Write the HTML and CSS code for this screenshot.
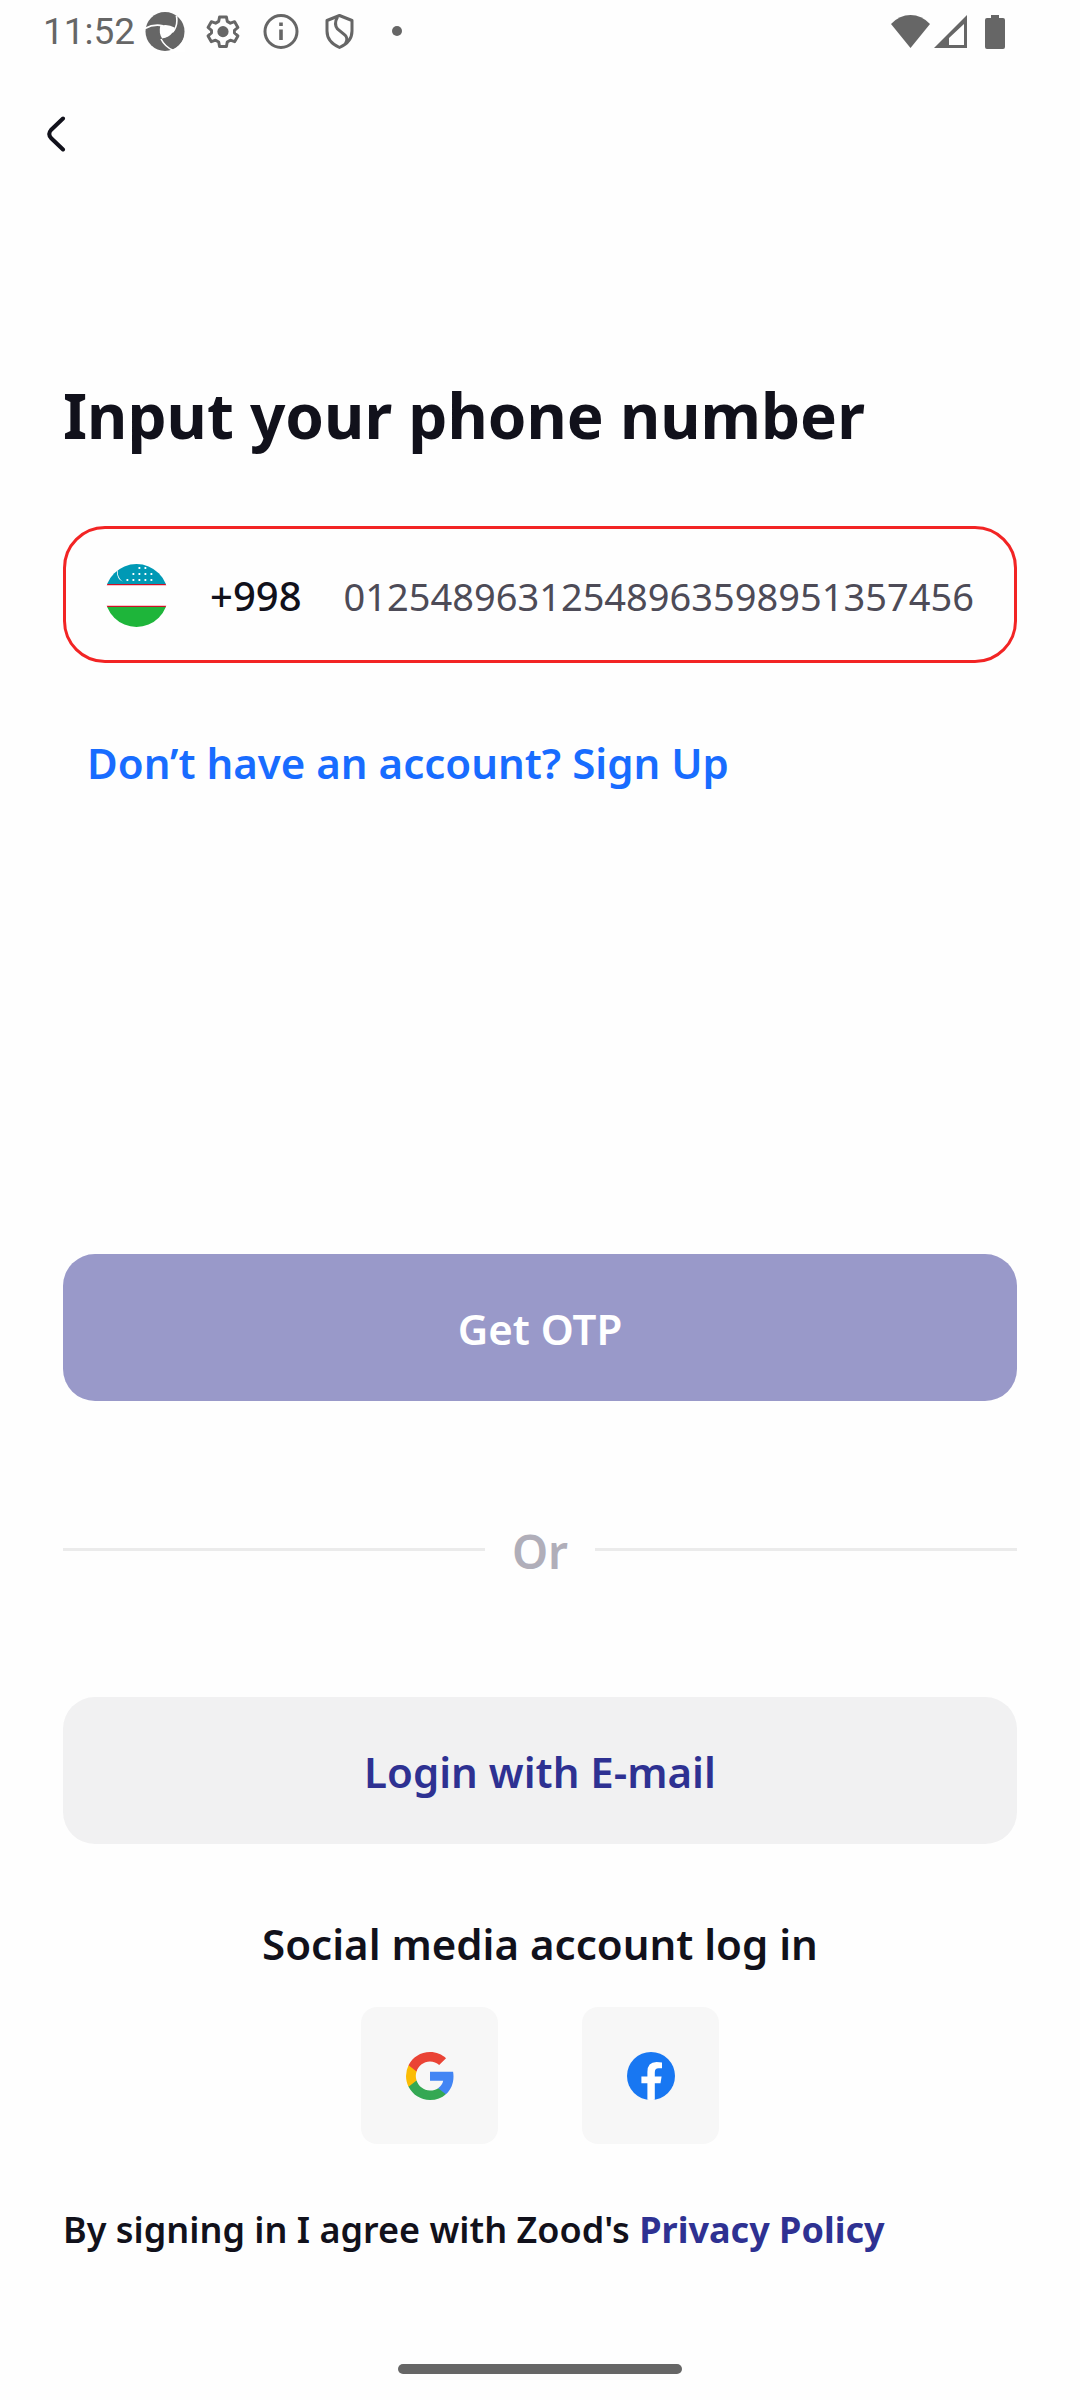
FILE: index.html
```html
<!DOCTYPE html>
<html lang="en">
<head>
<meta charset="utf-8">
<meta name="viewport" content="width=device-width, initial-scale=1">
<title>Log in</title>
<link rel="stylesheet" href="styles.css">
</head>
<body>
<div class="screen">
  <div class="status">
    <span class="status-time">11:52</span>
    <div class="status-notices">
      <svg class="notice" viewBox="0 0 40 40" aria-hidden="true">
        <circle cx="20" cy="19.500" r="19.500" fill="#666"/>
        <path fill="#fff" d="M15.300 13.700Q23 11.500 29.500 15.500Q30 18 27.800 20.300Q24 25.500 17.200 26.500Q13.500 21 15.300 13.700Z"/>
        <path fill="none" stroke="#fff" stroke-width="1.600" d="M0 16.500Q8 11.800 18 13.700M31.300 3.500Q33.500 13 27.500 20.500M16 27Q20 35 28.500 38.500"/>
        <path fill="#fff" d="M31 35.500L40 28V40H26Z"/>
        <path fill="#666" d="M38.900 24Q37 31 31 35.600L22 33Q19.500 30 17.500 27Q25 25.500 29 20L38 16Z"/>
      </svg>
      <svg class="notice" viewBox="0 0 40 40" aria-hidden="true">
        <g transform="translate(.3 0) scale(1.640)">
          <path fill="none" stroke="#666" stroke-width="1.800" stroke-linejoin="round" d="M9.900 3H14.100L14.600 5.700L16.500 6.800L19.100 5.900L21.100 9.400L19 11.200V12.800L21.100 14.600L19.100 18.100L16.500 17.200L14.600 18.300L14.100 21H9.900L9.400 18.300L7.500 17.200L4.900 18.100L2.900 14.600L5 12.800V11.200L2.900 9.400L4.900 5.900L7.500 6.800L9.400 5.700Z"/>
          <circle cx="12" cy="12" r="3.400" fill="#666"/>
        </g>
      </svg>
      <svg class="notice" viewBox="0 0 40 40" aria-hidden="true">
        <circle cx="20" cy="19.500" r="16" fill="none" stroke="#666" stroke-width="3"/>
        <path fill="#666" d="M18.200 10.500H21.800V14H18.200ZM18.200 17.500H21.800V28H18.200Z"/>
      </svg>
      <svg class="notice" viewBox="0 0 40 40" aria-hidden="true">
        <path fill="none" stroke="#666" stroke-width="3" stroke-linejoin="round" d="M20.500 3.500L33 8.500V19C33 26 28.500 32 20.500 35.500C12.500 32 8 26 8 19V8.500Z"/>
        <path fill="none" stroke="#666" stroke-width="3" d="M18.500 5Q14.500 12 18.500 17L26 23Q29.500 26.500 26.500 31.500"/>
      </svg>
      <svg class="notice" viewBox="0 0 40 40" aria-hidden="true"><circle cx="20" cy="19" r="5" fill="#666"/></svg>
    </div>
    <div class="status-system">
      <svg width="39" height="34" viewBox="0 0 39 34" aria-hidden="true"><path fill="#666" d="M0 9Q8.500 0 19.500 0T39 9L19.500 33Z"/></svg>
      <svg width="33" height="34" viewBox="0 0 33 34" aria-hidden="true"><path fill="#666" fill-rule="evenodd" d="M33 0V33H0ZM30 9L15 23V30H30Z"/></svg>
      <svg class="battery" width="20" height="34" viewBox="0 0 20 34" aria-hidden="true"><path fill="#666" d="M6 0H14V3H18Q20 3 20 5V32Q20 34 18 34H2Q0 34 0 32V5Q0 3 2 3H6Z"/></svg>
    </div>
  </div>

  <header class="topbar">
    <button class="back" type="button" aria-label="Back">
      <svg width="20" height="36" viewBox="0 0 20 36" aria-hidden="true"><path fill="none" stroke="#11111b" stroke-width="4" stroke-linecap="round" d="M17 2.500L5 14Q1.500 18 5 22L17 33.500"/></svg>
    </button>
  </header>

  <main class="content">
    <h1 class="title">Input your phone number</h1>

    <div class="phone">
      <svg class="flag" viewBox="0 0 63 63" aria-hidden="true">
        <clipPath id="disc"><circle cx="31.500" cy="31.500" r="31.500"/></clipPath>
        <g clip-path="url(#disc)">
          <path fill="#0099b5" d="M0 0H63V20H0Z"/>
          <path fill="#f7c4cb" d="M0 21H63V22H0ZM0 41H63V42H0Z"/>
          <path fill="#ce1126" d="M0 20H63V21H0ZM0 42H63V43H0Z"/>
          <path fill="#1eb53a" d="M0 43H63V63H0Z"/>
          <path fill="#fff" d="M15 2A10.500 10.500 0 0 0 19 18A9.500 9.500 0 0 1 15 2Z"/>
          <path fill="none" stroke="#fff" stroke-width="1.800" stroke-dasharray="1.800 4.200" d="M33.500 4H43M27.500 10H48M21.500 16H48"/>
        </g>
      </svg>
      <label class="prefix" for="number">+998</label>
      <input class="number" id="number" type="tel" value="01254896312548963598951357456">
    </div>

    <a class="signup" href="#signup">Don’t have an account? Sign Up</a>

    <button class="button button-primary" type="button">Get OTP</button>

    <div class="divider"><span class="divider-text">Or</span></div>

    <button class="button button-plain" type="button">Login with E-mail</button>

    <h2 class="social-title">Social media account log in</h2>
    <div class="social">
      <button class="tile" type="button" aria-label="Google">
        <svg width="48" height="48" viewBox="0 0 48 48" aria-hidden="true">
          <path fill="#4285f4" d="M47.500 24.550c0-1.630-.150-3.200-.420-4.710H24v9.020h13.190c-.580 3-2.300 5.550-4.870 7.260v5.980h7.870C44.800 37.860 47.500 31.770 47.500 24.550z"/>
          <path fill="#34a853" d="M24 48c6.480 0 11.910-2.130 15.890-5.820l-7.730-6c-2.150 1.450-4.900 2.310-8.160 2.310-6.260 0-11.550-4.220-13.440-9.900H2.540v6.190C6.510 42.620 14.620 48 24 48z"/>
          <path fill="#fbbc05" d="M10.560 28.590A14.400 14.400 0 0 1 9.800 24c0-1.600.270-3.140.760-4.590v-6.190H2.540A24 24 0 0 0 0 24c0 3.870.930 7.530 2.540 10.780z"/>
          <path fill="#ea4335" d="M24 9.510c3.530 0 6.690 1.210 9.180 3.590l6.850-6.850C35.900 2.380 30.480 0 24 0 14.620 0 6.510 5.380 2.540 13.220l8.020 6.190C12.450 13.730 17.740 9.510 24 9.510z"/>
        </svg>
      </button>
      <button class="tile" type="button" aria-label="Facebook">
        <svg width="48" height="48" viewBox="0 0 48 48" aria-hidden="true">
          <circle cx="24" cy="24" r="24" fill="#1877f2"/>
          <path fill="#fff" d="M20.400 47.800V31.200H14.400V24.500H20.400V20Q20.400 10 29.500 10Q32.500 10 35 10.500V16.300H31.500Q27.800 16.300 27.800 20.500V24.500H34.600L33.500 31.200H27.800V47.800Q24 48.300 20.400 47.800Z"/>
        </svg>
      </button>
    </div>

    <p class="terms">By signing in I agree with Zood's <a class="policy" href="#privacy">Privacy Policy</a></p>
  </main>

  <div class="home-bar"></div>
</div>
</body>
</html>
```
FILE: styles.css
```css
* { box-sizing: border-box; }

body {
  margin: 0;
  background: #fefefe;
  color: #11111b;
  font-family: "Noto Sans", sans-serif;
  font-size: 42px;
  font-weight: 600;
  line-height: 56px;
}

button, input { font: inherit; }
button { border: 0; padding: 0; cursor: pointer; }
a { text-decoration: none; }
svg { display: block; flex: none; }

.screen {
  display: flex;
  flex-direction: column;
  min-height: 100vh;
  padding-bottom: 26px;
}

.status {
  display: flex;
  align-items: center;
  height: 64px;
  padding: 0 75px 0 43px;
}
.status-time {
  margin-right: 10px;
  color: #666;
  font: 400 37px/44px Roboto, sans-serif;
}
.status-notices { display: flex; gap: 18px; }
.notice { width: 40px; height: 40px; }
.status-system {
  display: flex;
  gap: 4px;
  margin-left: auto;
}
.battery { margin-left: 14px; }

.topbar {
  display: flex;
  align-items: center;
  height: 140px;
  padding: 0 28px;
}
.back {
  display: grid;
  place-items: center;
  width: 56px;
  height: 56px;
  background: none;
}

.content {
  display: flex;
  flex-direction: column;
  padding: 171px 63px 0;
}

.title {
  margin: 0 0 71px;
  font-size: 62px;
  font-weight: 700;
  line-height: 80px;
}

.phone {
  display: flex;
  align-items: center;
  height: 137px;
  padding: 2px 36px 0 39px;
  border: 3px solid #f22424;
  border-radius: 42px;
  font-size: 38px;
}
.flag { width: 63px; height: 63px; }
.prefix {
  margin: 0 42px;
  font-size: 40px;
  font-weight: 500;
}
.number {
  flex: 1;
  min-width: 0;
  padding: 0;
  border: 0;
  outline: 0;
  background: none;
  color: #4d4b57;
  font-weight: 400;
}

.signup {
  align-self: flex-start;
  margin: 72px 0 463px 24px;
  color: #186cff;
}

.button {
  height: 147px;
  padding-top: 2px;
  border-radius: 32px;
}
.button-primary { background: #9999c9; color: #fff; }
.button-plain { background: #f1f1f2; color: #2e3192; }

.divider {
  display: flex;
  align-items: center;
  gap: 27px;
  margin: 114px 0;
  color: #b0aeb9;
  font-size: 46px;
  line-height: 64px;
}
.divider::before,
.divider::after {
  content: "";
  flex: 1;
  height: 3px;
  background: #ebebeb;
}
.divider-text { padding-top: 4px; }

.social-title {
  margin: 72px 0 35px;
  font-size: 42px;
  font-weight: 600;
  text-align: center;
}
.social {
  display: flex;
  justify-content: center;
  gap: 84px;
}
.tile {
  display: grid;
  place-items: center;
  width: 137px;
  height: 137px;
  border-radius: 16px;
  background: #f7f7f7;
}

.terms {
  margin: 62px 0 0;
  font-size: 36px;
  line-height: 48px;
}
.policy { color: #2e3192; font-weight: 700; }

.home-bar {
  width: 284px;
  height: 10px;
  margin: auto auto 0;
  border-radius: 5px;
  background: #666;
}
```
